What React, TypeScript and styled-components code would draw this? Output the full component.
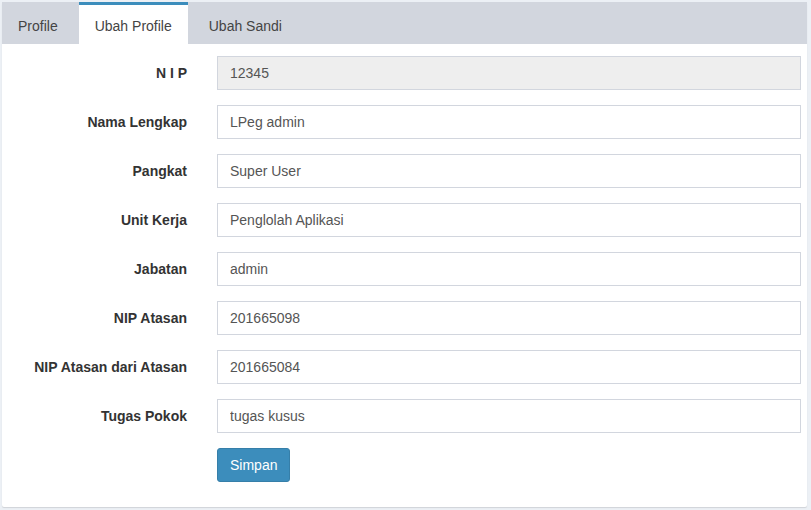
import styled, { createGlobalStyle } from "styled-components";

const GlobalStyle = createGlobalStyle`
    html, body {
        margin: 0;
        padding: 0;
        background: #ecf0f5;
        font-family: "Liberation Sans", Arial, Helvetica, sans-serif;
        font-size: 14px;
        color: #333;
    }
    * { box-sizing: border-box; }
`

const fields = [
    { label: "N I P", value: "12345", disabled: true },
    { label: "Nama Lengkap", value: "LPeg admin" },
    { label: "Pangkat", value: "Super User" },
    { label: "Unit Kerja", value: "Penglolah Aplikasi" },
    { label: "Jabatan", value: "admin" },
    { label: "NIP Atasan", value: "201665098" },
    { label: "NIP Atasan dari Atasan", value: "201665084" },
    { label: "Tugas Pokok", value: "tugas kusus" },
]

const tabs = ["Profile", "Ubah Profile", "Ubah Sandi"]

const App = () => {
    return (
        <>
            <GlobalStyle />
            <Box>
                <TabBar>
                    {tabs.map(t => (
                        <Tab key={t} active={t === "Ubah Profile"}>{t}</Tab>
                    ))}
                </TabBar>
                <TabContent>
                    {fields.map(f => (
                        <FormRow key={f.label}>
                            <Label>{f.label}</Label>
                            <Input defaultValue={f.value} disabled={f.disabled} />
                        </FormRow>
                    ))}
                    <FormRow>
                        <span />
                        <div>
                            <Button>Simpan</Button>
                        </div>
                    </FormRow>
                </TabContent>
            </Box>
        </>
    )
}

const Box = styled.div`
    margin: 2px 4px 3px 2px;
    background: #fff;
    box-shadow: 0 1px 1px rgba(0, 0, 0, 0.12);
    border-radius: 2px;
`

const TabBar = styled.ul`
    display: flex;
    margin: 0;
    padding: 0;
    list-style: none;
    height: 42px;
    background: #d2d6de;
`

const Tab = styled.li<{ active?: boolean }>`
    margin-right: 5px;
    padding: 11px 16px 0 16px;
    height: 42px;
    line-height: 20px;
    border-top: 3px solid ${props => props.active ? "#3c8dbc" : "transparent"};
    background: ${props => props.active ? "#fff" : "transparent"};
    color: #444;
    cursor: pointer;
`

const TabContent = styled.div`
    padding: 12px 6px 10px 10px;
`

const FormRow = styled.div`
    display: grid;
    grid-template-columns: 175px 1fr;
    column-gap: 30px;
    margin-bottom: 15px;
`

const Label = styled.label`
    text-align: right;
    font-weight: bold;
    padding-top: 7px;
    line-height: 20px;
    color: #333;
`

const Input = styled.input`
    display: block;
    width: 100%;
    height: 34px;
    padding: 6px 12px;
    font-family: inherit;
    font-size: 14px;
    color: #555;
    background: ${props => props.disabled ? "#eee" : "#fff"};
    border: 1px solid #d2d6de;
    border-radius: 0;
    outline: none;
`

const Button = styled.button`
    height: 34px;
    padding: 6px 12px;
    font-family: inherit;
    font-size: 14px;
    line-height: 20px;
    color: #fff;
    background: #3c8dbc;
    border: 1px solid #367fa9;
    border-radius: 3px;
    cursor: pointer;
`

export default App;
